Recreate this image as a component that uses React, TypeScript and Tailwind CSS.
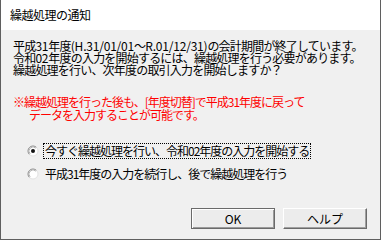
import React from "react";

function Radio({ checked }: { checked?: boolean }) {
  return (
    <svg width="12" height="12" viewBox="0 0 12 12" className="shrink-0">
      <circle cx="6" cy="6" r="5" fill="#ffffff" />
      <path d="M2.46 9.54 A5 5 0 0 1 9.54 2.46" fill="none" stroke="#8a8a8a" strokeWidth="1" />
      <path d="M3.17 8.83 A4 4 0 0 1 8.83 3.17" fill="none" stroke="#b5b5b5" strokeWidth="1" />
      <path d="M9.54 2.46 A5 5 0 0 1 2.46 9.54" fill="none" stroke="#e3e3e3" strokeWidth="1" />
      {checked && <circle cx="6" cy="6" r="2" fill="#111111" />}
    </svg>
  );
}

function A({ children }: { children: React.ReactNode }) {
  return <span className="tracking-[-0.2px]">{children}</span>;
}

export default function App() {
  return (
    <div className="w-[381px] h-[240px] flex flex-col bg-[#f0f0f0] border-l border-r border-b border-[#5f5f5f] font-['Noto_Sans_CJK_JP',sans-serif] text-black text-[12px] tracking-[-1px] overflow-hidden">
      <div className="h-[30px] shrink-0 bg-white flex items-center pl-[9px] tracking-[-0.5px]">
        繰越処理の通知
      </div>
      <div className="flex-1 flex flex-col pl-[12px]">
        <div className="mt-[10px] leading-[12px] tracking-[-0.8px]">
          <div>
            平成<A>31</A>年度<A>(H.31/01/01</A>～<A>R.01/12/31)</A>の会計期間が終了しています。
          </div>
          <div>
            令和<A>02</A>年度の入力を開始するには、繰越処理を行う必要があります。
          </div>
          <div>繰越処理を行い、次年度の取引入力を開始しますか？</div>
        </div>
        <div className="mt-[20px] leading-[12.5px] text-[#ff0000]">
          <div>※繰越処理を行った後も、[年度切替]で平成31年度に戻って</div>
          <div className="pl-[16px]">データを入力することが可能です。</div>
        </div>
        <div className="mt-[22px] flex items-center h-[16px] pl-[14px]">
          <Radio checked />
          <div className="ml-[4px] h-[16px] flex items-center border border-dotted border-black px-[1px] leading-[12px]">
            今すぐ繰越処理を行い、令和02年度の入力を開始する
          </div>
        </div>
        <div className="mt-[7px] flex items-center h-[16px] pl-[14px]">
          <Radio />
          <div className="ml-[4px] h-[16px] flex items-center border border-transparent px-[1px] leading-[12px]">
            平成31年度の入力を続行し、後で繰越処理を行う
          </div>
        </div>
        <div className="mt-auto mb-[10px] flex justify-end gap-[8px] pr-[13px]">
          <button className="w-[84px] h-[21px] bg-[#ececec] border border-[#6a6a6a] shadow-[inset_1px_1px_0_#ffffff,inset_-1px_-1px_0_#9a9a9a] flex items-center justify-center tracking-normal leading-none">
            OK
          </button>
          <button className="w-[84px] h-[21px] bg-[#ececec] border border-t-white border-l-white border-r-[#6a6a6a] border-b-[#6a6a6a] shadow-[inset_-1px_-1px_0_#a0a0a0] flex items-center justify-center tracking-normal leading-none">
            ヘルプ
          </button>
        </div>
      </div>
    </div>
  );
}
